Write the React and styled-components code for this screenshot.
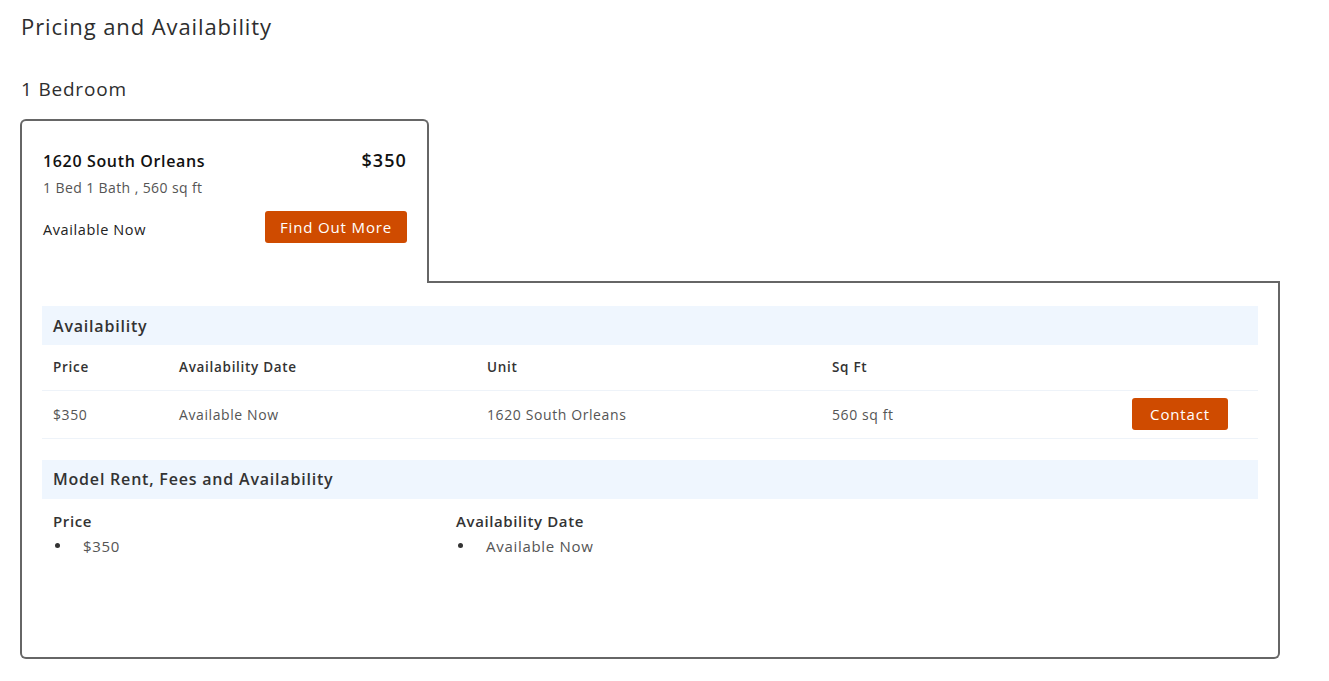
import React from 'react';
import styled, { createGlobalStyle } from 'styled-components';

const GlobalStyle = createGlobalStyle`
  * { box-sizing: border-box; }
  body {
    margin: 0;
    background: #fff;
    font-family: "Open Sans", "Noto Sans", sans-serif;
    color: #333;
  }
`;

const units = [
  { price: '$350', date: 'Available Now', unit: '1620 South Orleans', sqft: '560 sq ft' },
];

const App = () => {
  return (
    <>
      <GlobalStyle />
      <Page>
        <Title>Pricing and Availability</Title>
        <FloorTitle>1 Bedroom</FloorTitle>
        <TabRow>
          <Tab>
            <TabTop>
              <PlanName>1620 South Orleans</PlanName>
              <PlanPrice>$350</PlanPrice>
            </TabTop>
            <PlanSpecs>1 Bed 1 Bath , 560 sq ft</PlanSpecs>
            <TabBottom>
              <Avail>Available Now</Avail>
              <Button $h={32} $w={142}>Find Out More</Button>
            </TabBottom>
          </Tab>
          <TabFiller />
        </TabRow>
        <Panel>
          <SectionBar>Availability</SectionBar>
          <Table>
            <thead>
              <tr>
                <Th $w={126}>Price</Th>
                <Th $w={308}>Availability Date</Th>
                <Th $w={345}>Unit</Th>
                <Th>Sq Ft</Th>
                <Th />
              </tr>
            </thead>
            <tbody>
              {units.map((u) => (
                <tr key={u.unit}>
                  <Td>{u.price}</Td>
                  <Td>{u.date}</Td>
                  <Td>{u.unit}</Td>
                  <Td>{u.sqft}</Td>
                  <Td $right>
                    <Button $h={32} $w={96}>Contact</Button>
                  </Td>
                </tr>
              ))}
            </tbody>
          </Table>
          <SectionBar $mt={21}>Model Rent, Fees and Availability</SectionBar>
          <FeeGrid>
            <FeeCol>
              <FeeLabel>Price</FeeLabel>
              <FeeList>
                <li>$350</li>
              </FeeList>
            </FeeCol>
            <FeeCol>
              <FeeLabel>Availability Date</FeeLabel>
              <FeeList>
                <li>Available Now</li>
              </FeeList>
            </FeeCol>
          </FeeGrid>
        </Panel>
      </Page>
    </>
  );
};

export default App;

const Page = styled.div`
  padding: 11px 49px 22px 20px;
`;

const Title = styled.h2`
  margin: 0;
  font-size: 22px;
  font-weight: 500;
  line-height: 30px;
  letter-spacing: 0.9px;
  color: #2e2e2e;
  padding-left: 1px;
`;

const FloorTitle = styled.h3`
  margin: 36px 0 0;
  font-size: 19px;
  font-weight: 500;
  line-height: 24px;
  letter-spacing: 0.8px;
  color: #2e2e2e;
  padding-left: 1px;
`;

const TabRow = styled.div`
  display: flex;
  margin-top: 18px;
`;

const Tab = styled.div`
  width: 409px;
  height: 164px;
  border: 2px solid #666;
  border-bottom: none;
  border-radius: 6px 6px 0 0;
  padding: 27px 20px 0 21px;
`;

const TabFiller = styled.div`
  flex: 1;
  align-self: flex-end;
  height: 2px;
  margin-left: -1px;
  background: #666;
`;

const TabTop = styled.div`
  display: flex;
  justify-content: space-between;
  align-items: baseline;
`;

const PlanName = styled.div`
  font-size: 16px;
  font-weight: 600;
  letter-spacing: 0.65px;
  color: #111;
`;

const PlanPrice = styled.div`
  font-size: 18px;
  font-weight: 600;
  letter-spacing: 1.1px;
  color: #111;
`;

const PlanSpecs = styled.div`
  margin-top: 6px;
  font-size: 14px;
  font-weight: 400;
  letter-spacing: 0.4px;
  color: #555;
`;

const TabBottom = styled.div`
  margin-top: 14px;
  display: flex;
  justify-content: space-between;
  align-items: center;
`;

const Avail = styled.div`
  padding-top: 4px;
  font-size: 14.5px;
  font-weight: 500;
  letter-spacing: 0.6px;
  color: #222;
`;

const Button = styled.button`
  height: ${(p) => p.$h}px;
  width: ${(p) => p.$w}px;
  border: none;
  border-radius: 3px;
  background: #cf4b00;
  color: #fff;
  font-family: inherit;
  font-size: 15px;
  font-weight: 400;
  letter-spacing: 0.85px;
  padding: 0;
  cursor: pointer;
`;

const Panel = styled.div`
  border: 2px solid #666;
  border-top: none;
  border-radius: 0 0 6px 6px;
  height: 376px;
  padding: 23px 20px 0 20px;
`;

const SectionBar = styled.div`
  margin-top: ${(p) => p.$mt || 0}px;
  height: 39px;
  display: flex;
  align-items: center;
  padding: 0 11px;
  background: #eff6fe;
  font-size: 16px;
  font-weight: 600;
  letter-spacing: 0.8px;
  color: #333;
`;

const Table = styled.table`
  width: 100%;
  border-collapse: collapse;
  border-spacing: 0;
  tr {
    border-bottom: 1px solid #eef3f9;
  }
`;

const Th = styled.th`
  width: ${(p) => (p.$w ? `${p.$w}px` : 'auto')};
  height: 45px;
  padding: 0 11px;
  text-align: left;
  font-size: 13.5px;
  font-weight: 600;
  letter-spacing: 0.7px;
  color: #333;
`;

const Td = styled.td`
  height: 48px;
  padding: 0 ${(p) => (p.$right ? '30px' : '11px')} 0 11px;
  text-align: ${(p) => (p.$right ? 'right' : 'left')};
  font-size: 14px;
  font-weight: 400;
  letter-spacing: 0.6px;
  color: #555;
`;

const FeeGrid = styled.div`
  display: grid;
  grid-template-columns: 403px 1fr;
  padding: 12px 11px 0;
`;

const FeeCol = styled.div``;

const FeeLabel = styled.div`
  font-size: 15px;
  font-weight: 600;
  letter-spacing: 0.6px;
  color: #333;
  line-height: 20px;
`;

const FeeList = styled.ul`
  margin: 4px 0 0;
  padding: 0;
  list-style: none;
  font-size: 15px;
  font-weight: 400;
  letter-spacing: 0.7px;
  color: #555;
  line-height: 22px;
  li {
    display: flex;
    align-items: center;
  }
  li::before {
    content: '';
    width: 5px;
    height: 5px;
    margin: 0 23px 0 2px;
    border-radius: 50%;
    background: #333;
  }
`;
